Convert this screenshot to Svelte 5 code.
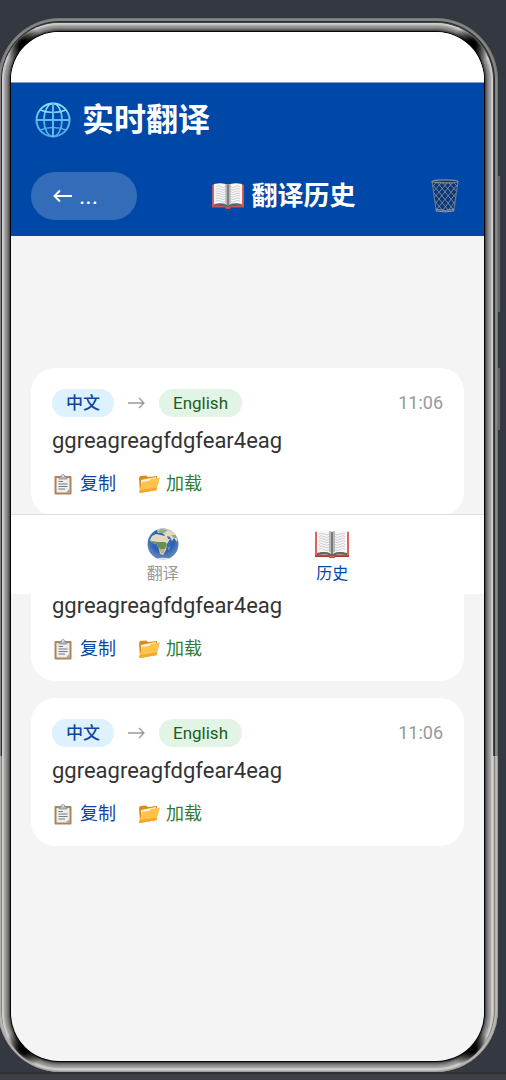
<script>
  const entries = [
    { id: 1, from: '中文', to: 'English', time: '11:06', text: 'ggreagreagfdgfear4eag' },
    { id: 2, from: '中文', to: 'English', time: '11:06', text: 'ggreagreagfdgfear4eag' },
    { id: 3, from: '中文', to: 'English', time: '11:06', text: 'ggreagreagfdgfear4eag' }
  ];
  const lines = [0, 1, 2, 3, 4, 5, 6];
</script>

{#snippet book()}
  <svg class="book" viewBox="0 0 34 28" aria-hidden="true">
    <path d="M0 2 4 1V24L15 25 17 26 19 25 30 24V1L34 2V27L20 27 19 28H15L14 27 0 27Z" fill="#dd6557" />
    <path d="M0 25.500H14L15 27.500H19L20 25.500H34V27H20L19 28H15L14 27H0Z" fill="#ae3026" />
    <path d="M2 23Q11 20 17 24 23 20 32 23V25Q22 23 19 26H15Q12 23 2 25Z" fill="#666" />
    <path d="M2 1Q11-1 17 2 23-1 32 1V23Q23 20 17 24 11 20 2 23Z" fill="#f7f7f7" />
    <path d="M14 1Q16 1 17 2 18 1 20 1V22Q18 22 17 24 16 22 14 22Z" fill="#b8b8b8" />
    <path d="M17 2V24" stroke="#666" stroke-width="1.500" />
    {#each lines as i}
      <path d={`M4 ${4 + i * 2.6}q2-2 5 0t5 0M20 ${4 + i * 2.6}q2 2 5 0t5 0`} fill="none" stroke="#c2c2c2" stroke-width=".8" />
    {/each}
  </svg>
{/snippet}

<div class="desk">
  <div class="phone">
    <div class="bezel">
      <main class="screen">
        <div class="status"></div>
        <header>
          <h1>
            <svg class="globe" viewBox="0 0 36 36" aria-hidden="true">
              <defs><linearGradient id="sky" x1="0" y1="0" x2="0" y2="1"><stop stop-color="#88dcfa" /><stop offset=".6" stop-color="#4fb8f0" /><stop offset="1" stop-color="#55a9ed" /></linearGradient></defs>
              <g fill="none" stroke="url(#sky)" stroke-width="1.700">
                <circle cx="18" cy="18" r="16.500" stroke-width="2" />
                <ellipse cx="18" cy="18" rx="9" ry="16.500" />
                <path d="M5 8Q18 13 31 8M5 28Q18 23 31 28" />
              </g>
              <path d="M17 1H19V35H17ZM1 17H35V19H1Z" fill="#5abef2" />
            </svg>
            <span>实时翻译</span>
          </h1>
          <div class="bar">
            <button class="back" aria-label="返回">
              <svg viewBox="0 0 20 14" aria-hidden="true"><path d="M7 1.500 1.500 7 7 12.500M1.500 7H19" fill="none" stroke="#fff" stroke-width="1.900" /></svg>
              <span>...</span>
            </button>
            <h2>{@render book()}<span>翻译历史</span></h2>
            <button class="trash" aria-label="清空">
              <svg viewBox="0 0 28 34" aria-hidden="true">
                <path d="M1 2 5 31Q14 34 23 31L27 2Q14 5 1 2Z" fill="#0b3874" />
                <path d="M2 6 22 30M3 14 18 32M4 22 12 32M6 3 24 25M11 3 25 19M17 3 26 13M22 3 27 8M26 6 6 30M25 14 11 32M24 22 17 32M22 3 4 25M17 3 3 19M11 3 2 13M6 3 1 8" stroke="#8796ad" stroke-width=".8" />
                <path d="M1 2 5 30M27 2 23 30" stroke="#6c7485" stroke-width="1.200" />
                <path d="M5 30Q14 33 23 30V32Q14 34 5 32Z" fill="#59647b" stroke="#a6adb9" stroke-width=".7" />
                <ellipse cx="14" cy="2.400" rx="13" ry="1.500" fill="#24334d" stroke="#858c98" stroke-width="1.200" />
              </svg>
            </button>
          </div>
        </header>

        <section class="history">
          {#each entries as entry (entry.id)}
            <article>
              <div class="meta">
                <span class="tag source">{entry.from}</span>
                <svg class="arrow" viewBox="0 0 17 12" aria-hidden="true"><path d="M0 6H16M11 1 16 6 11 11" fill="none" stroke="#999" stroke-width="1.300" /></svg>
                <span class="tag target">{entry.to}</span>
                <time>{entry.time}</time>
              </div>
              <p>{entry.text}</p>
              <div class="actions">
                <button class="copy">
                  <svg viewBox="0 0 22 22" aria-hidden="true">
                    <rect x="2.500" y="3" width="17" height="18.500" rx="1" fill="#b18455" />
                    <path d="M4.500 5H17.500V19.500H4.500Z" fill="#eceff2" />
                    <path d="M17.500 16V19.500H14Z" fill="#9da3aa" />
                    <path d="M6.500 8.500H11M6.500 11H15.500M6.500 13.500H15.500M6.500 16H13" stroke="#737b84" />
                    <path d="M7 6V4H9Q9 1.500 11 1.500T13 4H15V6Z" fill="#b7b9bb" stroke="#888" stroke-width=".7" />
                    <circle cx="11" cy="3" r=".8" fill="#fff" />
                  </svg>
                  <span>复制</span>
                </button>
                <button class="load">
                  <svg viewBox="0 0 22 22" aria-hidden="true">
                    <path d="M1 5 2 3 8 2.500 10 4 19 3V17L2 20Z" fill="#dc8c1b" />
                    <path d="M3 7 18 4V15L3 18Z" fill="#fff2d7" />
                    <path d="M1 20 4 9 11 8 13 6 22 4.500 18.500 17Z" fill="#ffc34c" />
                    <path d="M1 20 2 17 19 14.500 18.500 17Z" fill="#f5a52e" />
                  </svg>
                  <span>加载</span>
                </button>
              </div>
            </article>
          {/each}

          <nav>
            <button>
              <svg class="earth" viewBox="0 0 32 32" aria-hidden="true">
                <defs>
                  <radialGradient id="sea" cx=".5" cy=".4"><stop stop-color="#4380cd" /><stop offset=".7" stop-color="#2861b3" /><stop offset="1" stop-color="#5a7fb8" /></radialGradient>
                  <clipPath id="ball"><circle cx="16" cy="16" r="15.500" /></clipPath>
                </defs>
                <circle cx="16" cy="16" r="15.500" fill="url(#sea)" />
                <g clip-path="url(#ball)">
                  <path d="M10 2 14 0 24 1 28 5 31 10 30 14 27 10 25 13 23 9 20 8 21 11 23 11 20 16 19 22 16 27 13 26 12 21 10 16 5 15 3 12 5 8 9 6 14 7 17 8 18 7 15 5 11 5Z" fill="#e3d9c1" />
                  <path d="M4 13 11 14 18 14 20 16 18 21 14 22 11 19 10 16 5 15Z" fill="#698e4e" />
                  <path d="M12 21 18 21 17 25 14 26Z" fill="#c7ab90" />
                  <path d="M11 3 14 1 21 2 17 5 12 5ZM24 7 29 7 30 10 27 10Z" fill="#92ac7b" />
                  <path d="M21 20 23 18 22 23Z" fill="#95a38e" />
                  <path d="M9 30.500Q16 29 23 30.500L20 32H12Z" fill="#dce8f5" />
                </g>
              </svg>
              <span>翻译</span>
            </button>
            <button class="active">{@render book()}<span>历史</span></button>
          </nav>
        </section>
      </main>
    </div>
  </div>
  <footer></footer>
</div>

<style>
  :global(body) { margin: 0; background: #343841; }
  .desk {
    min-height: 100vh;
    box-sizing: border-box;
    display: flex;
    flex-direction: column;
    padding-top: 18px;
    overflow: hidden;
    background: #343841;
    font-family: Roboto, "Noto Sans CJK SC", sans-serif;
  }
  .phone {
    position: relative;
    flex: 1;
    display: flex;
    margin: 0 8px 0 -2px;
    padding: 5px 5px 2px 4px;
    border-radius: 62px;
    background: linear-gradient(#464646 70%, #c9c1b1 70%);
    box-shadow: inset 0 0 0 1px #00000022, inset 0 0 0 2px #ffffff11, inset 0 0 0 3px #ffffff66, inset 0 0 0 4px #00000055;
  }
  /* volume and power keys */
  .phone::before {
    content: "";
    position: absolute;
    top: 158px;
    right: -2px;
    width: 2px;
    height: 254px;
    background: linear-gradient(#666 136px, #0000 136px 192px, #666 192px);
  }
  .bezel {
    position: relative;
    flex: 1;
    display: flex;
    padding: 9px;
    border-radius: 57px;
    background: #c4c4c4;
    overflow: hidden;
  }
  .bezel::before {
    content: "";
    position: absolute;
    inset: 0;
    z-index: 1;
    background:
      radial-gradient(circle at 22px 22px, #000 4px, #0000 20px) 0 0 / 50% 50% no-repeat,
      radial-gradient(circle at calc(100% - 22px) 22px, #000 4px, #0000 20px) 100% 0 / 50% 50% no-repeat,
      radial-gradient(circle at 22px calc(100% - 22px), #000 4px, #0000 20px) 0 100% / 50% 50% no-repeat,
      radial-gradient(circle at calc(100% - 22px) calc(100% - 22px), #000 4px, #0000 20px) 100% 100% / 50% 50% no-repeat;
  }
  .screen {
    position: relative;
    z-index: 2;
    flex: 1;
    min-width: 0;
    border-radius: 48px;
    background: #f4f4f4;
    box-shadow: 0 0 0 1px #050505;
    overflow: hidden;
  }
  .bezel::after {
    content: "";
    position: absolute;
    inset: 9px;
    border-radius: 48px;
    box-shadow: 0 0 0 2px #484848, 0 0 0 3px #656565, 0 0 0 4px #7b7b7b, 0 0 0 5px #8c8c8c, 0 0 0 6px #999, 0 0 0 7px #a9a9a9, 0 0 0 8px #c4c4c4, 0 0 0 9px #d0d0d0;
  }
  .status { height: 50px; background: #fff; }
  header { padding: 13px 20px 16px; background: #0048a8; color: #fff; box-shadow: inset 0 1px #7fa3cf; }
  h1, h2, p { margin: 0; }
  h1 { display: flex; align-items: center; gap: 11px; height: 49px; padding-left: 4px; font-size: 32px; line-height: 48px; }
  .globe { width: 36px; height: 36px; }
  .bar { display: flex; align-items: center; justify-content: space-between; height: 48px; margin-top: 28px; }
  button { display: flex; align-items: center; border: 0; padding: 0; background: none; color: inherit; font: inherit; }
  .back { gap: 6px; width: 106px; height: 48px; padding-left: 22px; border-radius: 24px; background: #ffffff33; font-size: 24px; }
  .back svg { width: 20px; height: 14px; }
  h2 { display: flex; align-items: center; gap: 7px; font-size: 26px; line-height: 40px; }
  h2 :global(.book) { width: 32px; height: 26px; }
  .trash { padding-right: 5px; }
  .trash svg { width: 28px; height: 34px; }
  .history { position: relative; display: flex; flex-direction: column; gap: 17px; padding: 132px 20px 20px; }
  article { padding: 20px 21px; border-radius: 24px; background: #fff; }
  .meta { display: flex; align-items: center; height: 29px; }
  .tag { padding: 0 14px; border-radius: 14px; font-size: 17px; line-height: 28px; font-weight: 500; }
  .source { background: #def1fe; color: #0d47a1; }
  .target { background: #e2f4e5; color: #1b5e20; font-weight: 400; }
  .arrow { width: 17px; height: 12px; margin: 0 14px; }
  time { margin-left: auto; color: #999; font-size: 18px; line-height: 28px; }
  p { margin-top: 9px; color: #333; font-size: 22px; line-height: 30px; overflow-wrap: anywhere; }
  .actions { display: flex; gap: 22px; margin-top: 16px; height: 24px; font-size: 18px; line-height: 24px; }
  .actions button { gap: 6px; }
  .actions svg { width: 22px; height: 22px; }
  .copy { color: #0d47a1; }
  .load { color: #2e7d32; }
  nav {
    position: absolute;
    inset: 278px 0 auto;
    display: flex;
    justify-content: center;
    padding: 0 67px;
    border-top: 1px solid #ddd;
    background: #fff;
    color: #999;
    font-size: 16px;
    line-height: 20px;
  }
  nav button { flex: 1; flex-direction: column; height: 79px; padding-top: 13px; gap: 4px; box-sizing: border-box; }
  nav .active { color: #0048a8; }
  .earth { width: 32px; height: 32px; }
  nav :global(.book) { width: 34px; height: 28px; margin: 2px 0; }
  footer { height: 6px; border-top: 2px solid #303132; background: #3c4044; }
</style>
